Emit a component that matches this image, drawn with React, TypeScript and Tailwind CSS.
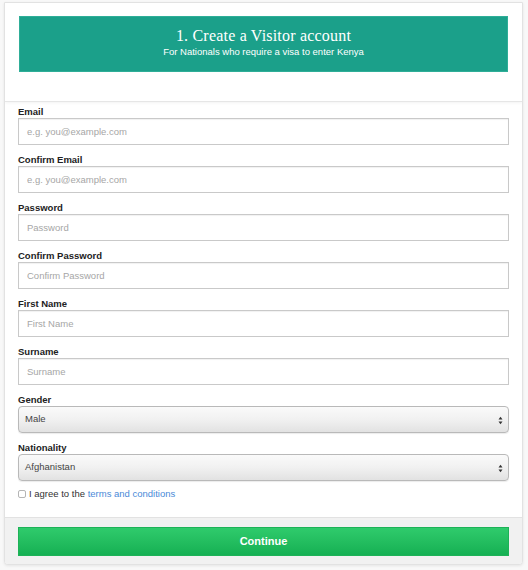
import React from "react";

const fieldFont = { fontFamily: '"Liberation Sans", Arial, sans-serif' };

function TextField({ label, placeholder, type = "text" }: { label: string; placeholder: string; type?: string }) {
  return (
    <div className="flex flex-col">
      <label className="text-[9.5px] font-bold text-[#222] leading-[13px] h-[13px]">{label}</label>
      <input
        type={type}
        placeholder={placeholder}
        className="h-[27px] w-full border border-[#c9c9c9] bg-white px-[8px] text-[9.5px] text-[#333] placeholder:text-[#a6a6a6] outline-none shadow-[inset_0_1px_1px_rgba(0,0,0,0.06)]"
        style={fieldFont}
      />
    </div>
  );
}

function SelectField({ label, value }: { label: string; value: string }) {
  return (
    <div className="flex flex-col">
      <label className="text-[9.5px] font-bold text-[#222] leading-[13px] h-[13px]">{label}</label>
      <div className="relative h-[27px] w-full rounded-[4px] border border-[#b9b9b9] bg-gradient-to-b from-[#fafafa] via-[#f1f1f1] to-[#e2e2e2] shadow-[0_1px_1px_rgba(0,0,0,0.08)] flex items-center px-[6px]">
        <span className="text-[9.5px] text-[#444]">{value}</span>
        <svg className="absolute right-[5px] top-[9px]" width="5" height="9" viewBox="0 0 5 9">
          <path d="M0.5 3.5 L2.5 0.8 L4.5 3.5 Z" fill="#333" />
          <path d="M0.5 5.5 L2.5 8.2 L4.5 5.5 Z" fill="#333" />
        </svg>
      </div>
    </div>
  );
}

export default function App() {
  return (
    <div className="min-h-[570px] w-[528px] bg-[#f8f8f8] pt-[2px] px-[4px]" style={fieldFont}>
      <div className="w-[519px] rounded-b-[4px] border border-[#e2e2e2] bg-white shadow-[0_1px_3px_rgba(0,0,0,0.08)] overflow-hidden">
        {/* header */}
        <div className="px-[14px] pt-[13px] pb-[29px] border-b border-[#e6e6e6] shadow-[0_1px_3px_rgba(0,0,0,0.05)]">
          <div className="h-[56px] bg-[#1ba08a] border border-[#2fae98] flex flex-col items-center justify-center pb-[4px] text-white">
            <div className="text-[16px] leading-[18px] tracking-[0.2px]" style={{ fontFamily: '"Liberation Serif", "Times New Roman", serif' }}>
              1. Create a Visitor account
            </div>
            <div className="text-[9.5px] leading-[12px] mt-[1px]">For Nationals who require a visa to enter Kenya</div>
          </div>
        </div>

        {/* form */}
        <div className="px-[13px] pt-[3px] pb-[16px] flex flex-col gap-[8px]">
          <TextField label="Email" placeholder="e.g. you@example.com" />
          <TextField label="Confirm Email" placeholder="e.g. you@example.com" />
          <TextField label="Password" placeholder="Password" type="password" />
          <TextField label="Confirm Password" placeholder="Confirm Password" type="password" />
          <TextField label="First Name" placeholder="First Name" />
          <TextField label="Surname" placeholder="Surname" />
          <SelectField label="Gender" value="Male" />
          <SelectField label="Nationality" value="Afghanistan" />
          <div className="flex items-center -mt-[2px] h-[14px]">
            <span className="mr-[3px] inline-block h-[8px] w-[8px] rounded-[2px] border border-[#b5b5b5] bg-white" />
            <span className="text-[9.5px] text-[#333]">
              I agree to the <span className="text-[#4a8ad8]">terms and conditions</span>
            </span>
          </div>
        </div>

        {/* footer */}
        <div className="border-t border-[#e2e2e2] bg-[#f1f1f1] px-[13px] pt-[9px] pb-[8px]">
          <button className="h-[29px] w-full border border-[#1db257] bg-gradient-to-b from-[#2fcb6c] to-[#15b053] text-[11px] font-bold text-white">
            Continue
          </button>
        </div>
      </div>
    </div>
  );
}
